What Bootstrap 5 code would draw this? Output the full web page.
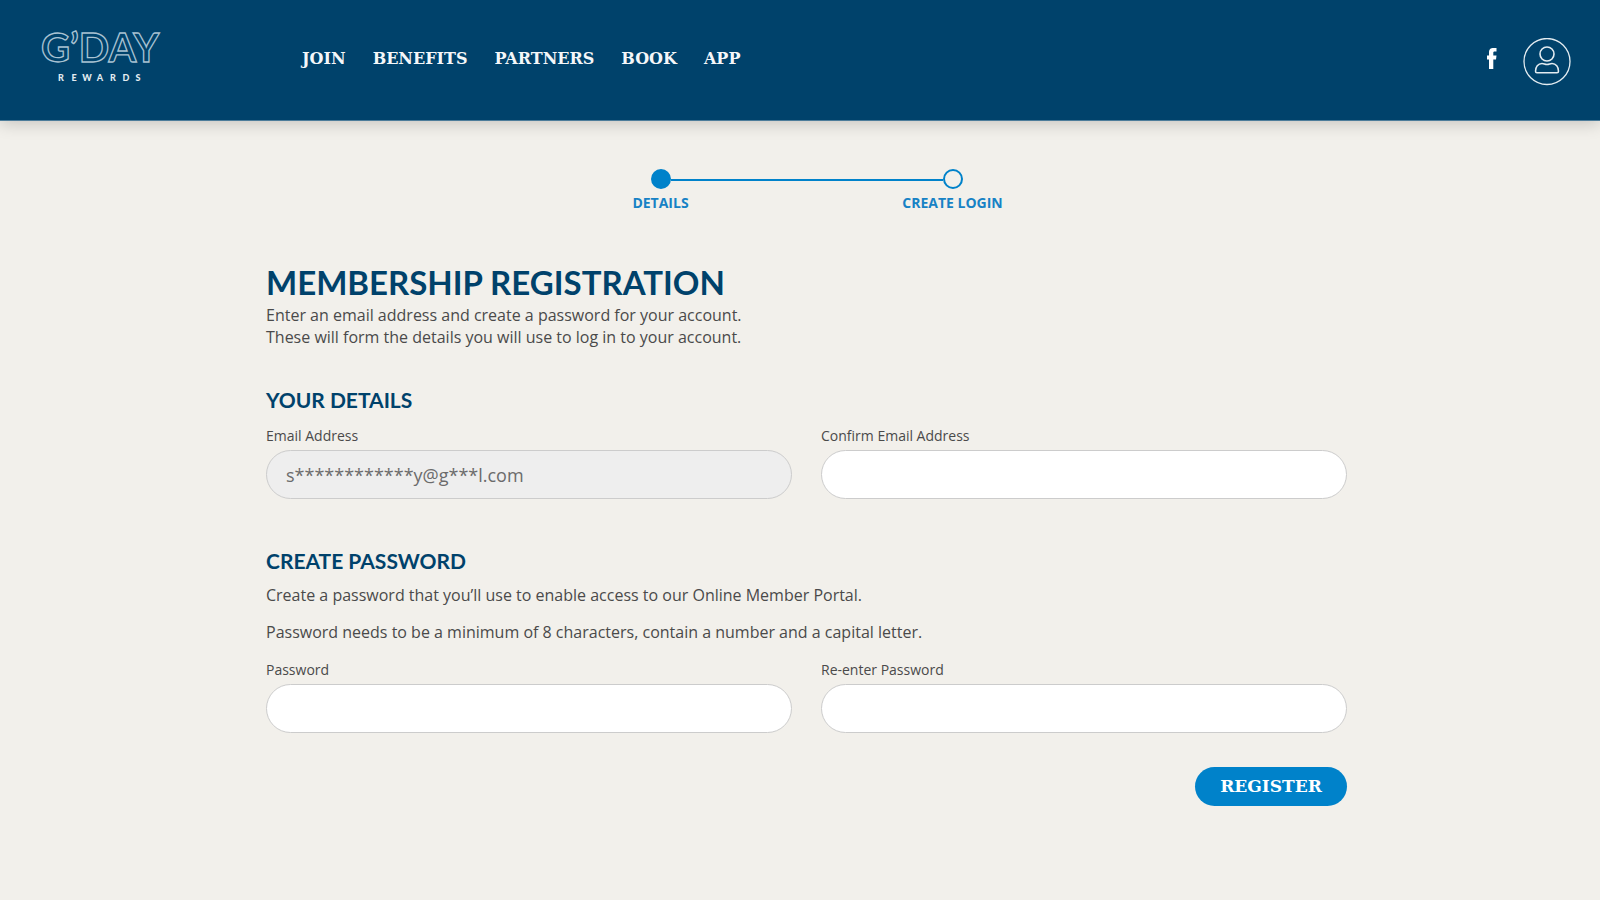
<!DOCTYPE html>
<html lang="en">
<head>
<meta charset="utf-8">
<meta name="viewport" content="width=device-width, initial-scale=1">
<title>G’Day Rewards – Membership Registration</title>
<link rel="stylesheet" href="https://cdn.jsdelivr.net/npm/bootstrap@5.3.0/dist/css/bootstrap.min.css">
<style>
  body { background: #f2f0eb; color: #4a4a4a; font-family: "Open Sans", "Noto Sans", sans-serif; font-size: 16px; line-height: 22px; }
  .site-header { background: #00426b; border-bottom: 1px solid #4d7c9a; box-shadow: 0 2px 16px rgba(0,0,0,.2); min-height: 121px; padding: 0 29px 0 40px; }
  .brand-logo { width: 262px; }
  .site-nav { gap: 27px; padding-top: 48px; }
  .site-nav .nav-link { padding: 0; color: #f4f7f9; font: bold 16px/22px "DejaVu Serif", serif; }
  .header-tools { gap: 25px; padding-top: 38px; }
  .page-main { padding: 48px 24px 64px 37px; }
  .form-wrap { max-width: 1081px; }
  .steps { width: 312px; font-size: 14px; font-weight: 700; line-height: 20px; color: #1782c5; }
  .steps li { width: 20px; }
  .step-dot { width: 20px; height: 20px; border: 2px solid #0082ca; border-radius: 50%; }
  .step-dot.current { background: #0082ca; }
  .step-line { height: 2px; margin-top: 10px; background: #0082ca; }
  .step-name { margin-top: 4px; }
  h1, h2 { font-family: Lato, sans-serif; font-weight: 700; color: #00426b; margin: 0; }
  h1 { font-size: 33px; line-height: 40px; margin: 49px 0 2px; }
  h2 { font-size: 21px; line-height: 24px; }
  .details-title { margin-top: 40px; }
  .password-title { margin-top: 50px; }
  .hint { margin: 11px 0 0; }
  .hint + .hint { margin: 15px 0; }
  .fields { --bs-gutter-x: 29px; }
  .form-label { font-size: 14px; line-height: 20px; margin-bottom: 4px; }
  .form-control { height: 49px; border: 1px solid #ccc; border-radius: 25px; padding: 0 19px; font-size: 18px; background: #fff; color: #6b6b6b; }
  .form-control:disabled { background: #eee; opacity: 1; }
  .form-actions { margin-top: 34px; }
  .btn-register { height: 39px; min-width: 152px; padding: 0 24px; border: 0; border-radius: 20px; background: #0082ca; color: #fff; font: bold 17px/39px "DejaVu Serif", serif; }
</style>
</head>
<body>
<header class="site-header d-flex align-items-start">
  <a class="brand-logo d-block pt-4 flex-shrink-0" href="#" aria-label="G’Day Rewards">
    <svg class="d-block" width="140" height="64" viewBox="0 0 140 64" font-family="Lato, sans-serif">
      <text x="1" y="38" font-size="40" font-weight="700" fill="none" stroke="#a9c3d3" stroke-width="1.300">G’DAY</text>
      <g fill="#e3ecf1" font-size="9" font-weight="900" text-anchor="middle">
        <text x="21" y="57">R</text><text x="34" y="57">E</text><text x="47" y="57">W</text><text x="60" y="57">A</text><text x="73" y="57">R</text><text x="86" y="57">D</text><text x="98" y="57">S</text>
      </g>
    </svg>
  </a>
  <nav class="nav site-nav me-auto" aria-label="Main">
    <a class="nav-link" href="#">JOIN</a>
    <a class="nav-link" href="#">BENEFITS</a>
    <a class="nav-link" href="#">PARTNERS</a>
    <a class="nav-link" href="#">BOOK</a>
    <a class="nav-link" href="#">APP</a>
  </nav>
  <div class="header-tools d-flex">
    <a href="#" aria-label="Facebook" class="pt-2">
      <svg class="d-block" width="12" height="24" viewBox="0 0 12 24"><path fill="#fff" d="M3 23V13.500H1V9.500h2V6.800C3 3.300 4.500 2 7.600 2H10.500V5.500H8.700C7.500 5.500 7.300 6 7.300 7v2.500h3.200L10 13.500H7.300V23z"/></svg>
    </a>
    <a href="#" aria-label="My account">
      <svg class="d-block" width="48" height="48" viewBox="0 0 48 48" fill="none" stroke="#e3ecf1"><circle cx="24" cy="23.500" r="23" stroke-width="1.300"/><circle cx="24" cy="16" r="7" stroke-width="1.600"/><path stroke-width="1.500" stroke-linejoin="round" d="M14 34.700h20q1.500 0 1.500-1.500c0-4.300-2.500-7.700-6.500-7.700-1.800 0-3 1-5 1s-3.200-1-5-1c-4 0-6.500 3.400-6.500 7.700q0 1.500 1.500 1.500z"/></svg>
    </a>
  </div>
</header>

<main class="page-main">
  <div class="form-wrap mx-auto">
    <ol class="steps list-unstyled d-flex mx-auto mb-0">
      <li class="d-flex flex-column align-items-center flex-shrink-0 text-nowrap" aria-current="step"><span class="step-dot current"></span><span class="step-name">DETAILS</span></li>
      <li class="step-line flex-grow-1" aria-hidden="true"></li>
      <li class="d-flex flex-column align-items-center flex-shrink-0 text-nowrap"><span class="step-dot"></span><span class="step-name">CREATE LOGIN</span></li>
    </ol>

    <h1>MEMBERSHIP REGISTRATION</h1>
    <p class="mb-0">Enter an email address and create a password for your account.<br>These will form the details you will use to log in to your account.</p>

    <form>
      <h2 class="details-title">YOUR DETAILS</h2>
      <div class="row fields pt-2 mt-1">
        <div class="col-md-6">
          <label class="form-label" for="email">Email Address</label>
          <input class="form-control" id="email" type="text" value="s************y@g***l.com" disabled>
        </div>
        <div class="col-md-6">
          <label class="form-label" for="email2">Confirm Email Address</label>
          <input class="form-control" id="email2" type="email">
        </div>
      </div>

      <h2 class="password-title">CREATE PASSWORD</h2>
      <p class="hint">Create a password that you’ll use to enable access to our Online Member Portal.</p>
      <p class="hint">Password needs to be a minimum of 8 characters, contain a number and a capital letter.</p>
      <div class="row fields">
        <div class="col-md-6">
          <label class="form-label" for="pw">Password</label>
          <input class="form-control" id="pw" type="password">
        </div>
        <div class="col-md-6">
          <label class="form-label" for="pw2">Re-enter Password</label>
          <input class="form-control" id="pw2" type="password">
        </div>
      </div>
      <div class="form-actions d-flex justify-content-end">
        <button class="btn btn-register" type="submit">REGISTER</button>
      </div>
    </form>
  </div>
</main>
<script src="https://cdn.jsdelivr.net/npm/bootstrap@5.3.0/dist/js/bootstrap.bundle.min.js"></script>
</body>
</html>
